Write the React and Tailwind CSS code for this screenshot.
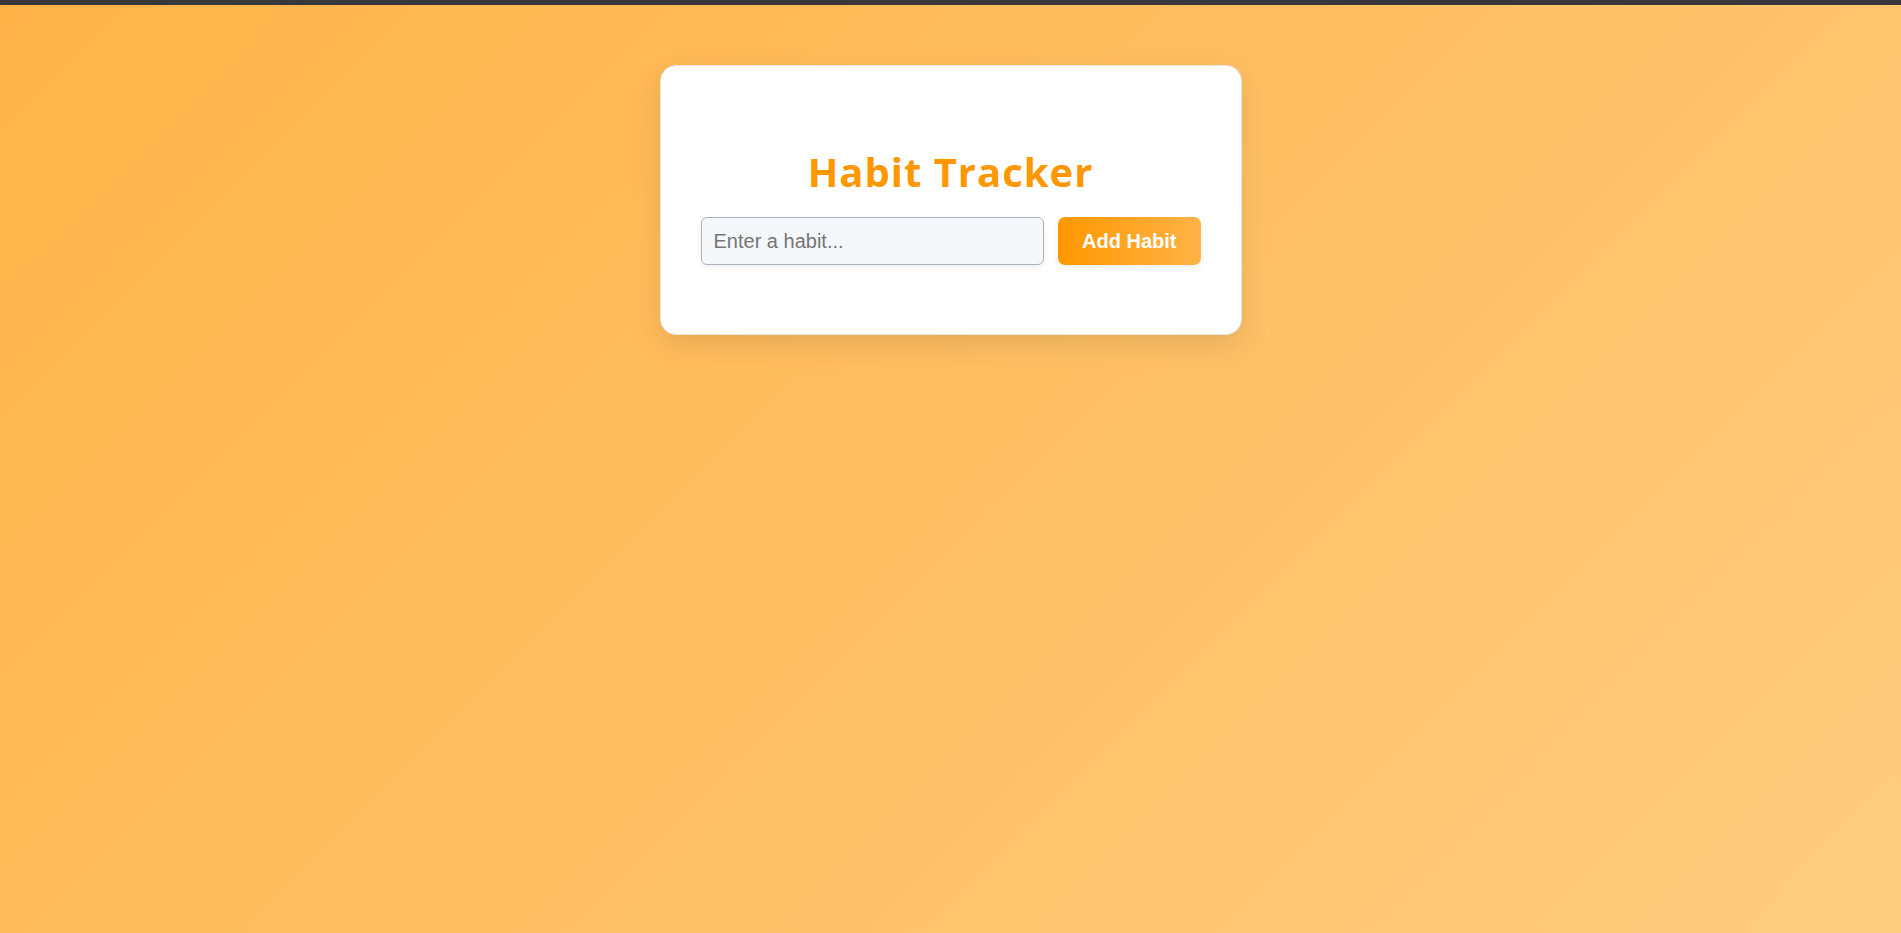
import React from "react";

export default function App() {
  return (
    <div className="min-h-screen w-full flex flex-col bg-[linear-gradient(135deg,#ffb347,#ffcc80)]">
      <div className="h-[5px] w-full bg-[#38373c] shrink-0" />
      <div className="flex justify-center pt-[60px]">
        <div className="w-[582px] bg-white rounded-[16px] border border-[#e4e4e4] shadow-[0_10px_30px_rgba(0,0,0,0.1)] px-[40px] pt-[82px] pb-[69px]">
          <h1
            className="text-center text-[40px] leading-[48px] font-bold text-[#ff9800] tracking-[1px] mb-[21px]"
            style={{ fontFamily: '"Open Sans", "Noto Sans", sans-serif' }}
          >
            Habit Tracker
          </h1>
          <div className="flex gap-[14px]" style={{ fontFamily: '"Liberation Sans", Arial, sans-serif' }}>
            <input
              type="text"
              placeholder="Enter a habit..."
              className="flex-1 h-[48px] rounded-[6px] border border-[#aab4bd] bg-[#f5f8fb] px-[12px] text-[20px] text-[#333] placeholder:text-[#757575] outline-none shadow-[0_2px_6px_rgba(0,0,0,0.07)]"
            />
            <button className="h-[48px] px-[24px] rounded-[7px] bg-[linear-gradient(90deg,#ff9800,#ffb347)] text-white text-[20px] font-bold shadow-[0_2px_6px_rgba(0,0,0,0.08)]">
              Add Habit
            </button>
          </div>
        </div>
      </div>
    </div>
  );
}
